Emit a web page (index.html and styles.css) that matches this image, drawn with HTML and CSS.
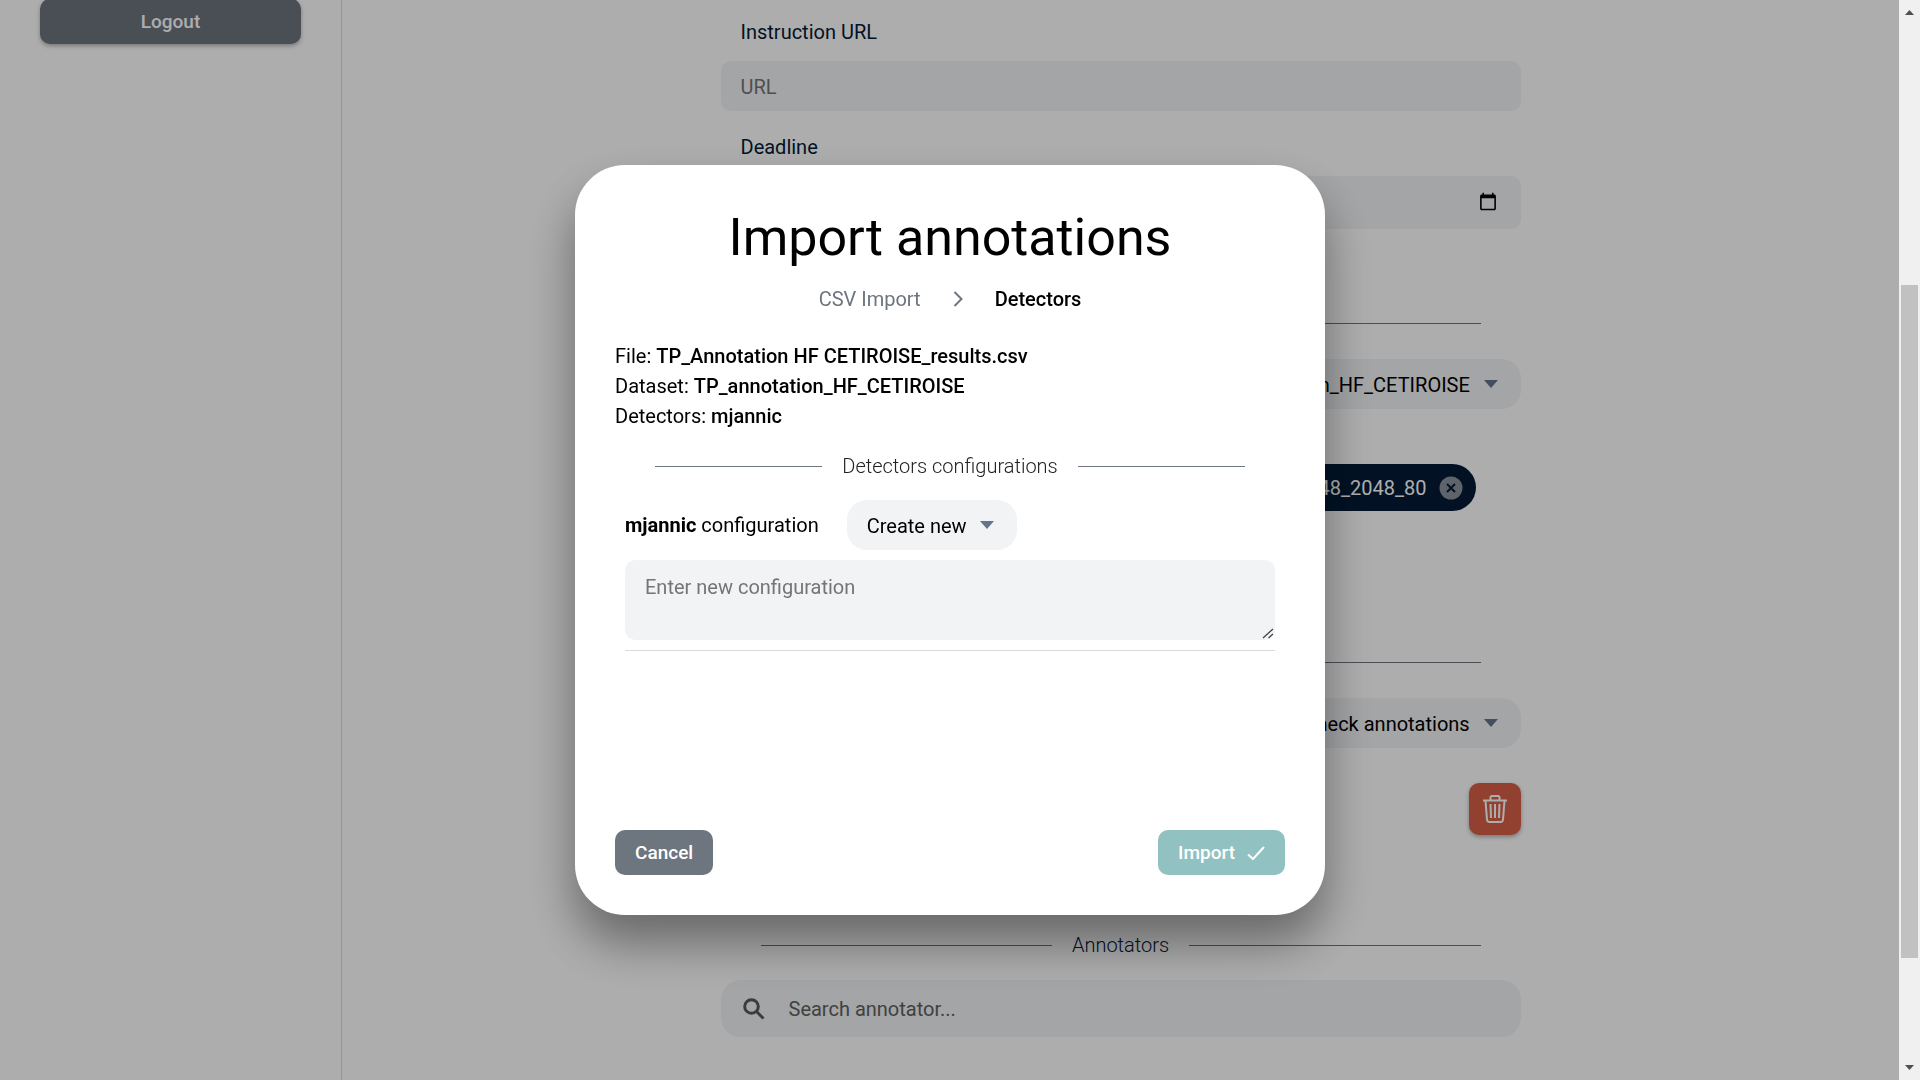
FILE: index.html
```html
<!DOCTYPE html>
<html lang="en">
<head>
<meta charset="utf-8">
<title>Import annotations</title>
<link rel="stylesheet" href="styles.css">
</head>
<body>
<div class="app">
  <aside class="sidebar">
    <button class="btn btn-medium btn-block" type="button">Logout</button>
  </aside>

  <main class="content">
    <form class="form">
      <div class="field">
        <label for="url">Instruction URL</label>
        <input class="input" id="url" type="url" placeholder="URL">
      </div>
      <div class="field field-date">
        <label for="deadline">Deadline</label>
        <input class="input" id="deadline" type="date">
      </div>

      <hr class="rule">
      <div class="row">
        <div class="select">
          <select aria-label="Dataset"><option>TP_annotation_HF_CETIROISE</option></select>
          <svg class="caret" viewBox="0 0 14 8" aria-hidden="true"><path d="M0 0h14L7 8z"/></svg>
        </div>
      </div>
      <div class="row row-chip">
        <div class="chip">2048_2048_80
          <button class="chip-close" type="button" aria-label="Remove">
            <svg viewBox="0 0 24 24" aria-hidden="true"><circle cx="12" cy="12" r="11.500"/><path d="M8 8l8 8M16 8l-8 8"/></svg>
          </button>
        </div>
      </div>

      <hr class="rule">
      <div class="row">
        <div class="select">
          <select aria-label="Usage"><option>Check annotations</option></select>
          <svg class="caret" viewBox="0 0 14 8" aria-hidden="true"><path d="M0 0h14L7 8z"/></svg>
        </div>
      </div>
      <div class="row row-delete">
        <button class="btn btn-danger" type="button" aria-label="Delete">
          <svg viewBox="0 0 28 28" aria-hidden="true"><path d="M2 5.500h24M9.500 5V2.500q0-1.500 1.500-1.500h6q1.500 0 1.500 1.500V5M4.500 6l1.500 18.500q.2 2.500 2.500 2.500h11q2.300 0 2.500-2.500L23.500 6M9.500 9l.5 14M14 9v14M18.500 9l-.5 14"/></svg>
        </button>
      </div>

      <h2 class="divider">Annotators</h2>
      <label class="search">
        <svg viewBox="0 0 22 22" aria-hidden="true"><circle cx="8.500" cy="8.500" r="6.800"/><path d="M13.500 13.500l7 7"/></svg>
        <input type="text" aria-label="Search annotator" placeholder="Search annotator...">
      </label>
    </form>
  </main>

  <div class="scrollbar" aria-hidden="true">
    <svg viewBox="0 0 9 5"><path d="M0 5h9L4.500 0z"/></svg>
    <div class="track"><div class="thumb"></div></div>
    <svg viewBox="0 0 9 5"><path d="M0 0h9L4.500 5z"/></svg>
  </div>
</div>

<div class="backdrop">
  <section class="modal" role="dialog" aria-labelledby="modal-title">
    <h1 id="modal-title">Import annotations</h1>
    <div class="steps">
      <span class="step">CSV Import</span>
      <svg viewBox="0 0 10 16" aria-hidden="true"><path d="M1.500 1l7 7-7 7"/></svg>
      <span class="step step-active">Detectors</span>
    </div>
    <div class="info">
      <p>File: <b>TP_Annotation HF CETIROISE_results.csv</b></p>
      <p>Dataset: <b>TP_annotation_HF_CETIROISE</b></p>
      <p>Detectors: <b>mjannic</b></p>
    </div>
    <h2 class="divider">Detectors configurations</h2>
    <div class="config">
      <div class="config-head">
        <label for="config-select"><strong>mjannic</strong> configuration</label>
        <div class="select">
          <select id="config-select"><option>Create new</option></select>
          <svg class="caret" viewBox="0 0 14 8" aria-hidden="true"><path d="M0 0h14L7 8z"/></svg>
        </div>
      </div>
      <textarea class="input" aria-label="New configuration" placeholder="Enter new configuration"></textarea>
    </div>
    <footer class="actions">
      <button class="btn btn-medium" type="button">Cancel</button>
      <button class="btn btn-primary" type="button">Import
        <svg viewBox="0 0 18 14" aria-hidden="true"><path d="M1 8.500l5 4.500L17 1"/></svg>
      </button>
    </footer>
  </section>
</div>
</body>
</html>
```
FILE: styles.css
```css
:root {
  --dark: #031b36;
  --medium: #6d757f;
  --light: #f1f3f5;
}

* { box-sizing: border-box; margin: 0; }

body {
  height: 100vh;
  overflow: hidden;
  background: #fff;
  color: #000;
  font: 400 20px/30px Roboto, sans-serif;
}

button, input, select, textarea { font: inherit; border: 0; }

.app {
  display: grid;
  grid-template-columns: 342px 1fr 21px;
  height: 100%;
}

.sidebar {
  border-right: 1px solid #d9dadc;
  padding: 0 40px;
}

.content { padding: 17px 40px; overflow: hidden; }

.form {
  max-width: 800px;
  margin: 0 auto;
  display: flex;
  flex-direction: column;
}

/* buttons */
.btn {
  display: flex;
  align-items: center;
  justify-content: center;
  gap: 12px;
  height: 45px;
  padding: 0 20px;
  border-radius: 10px;
  color: #fff;
  font-size: 19px;
  font-weight: 500;
  box-shadow: 0 2px 4px rgba(0, 0, 0, .3);
}
.btn svg { fill: none; stroke: #fff; }
.btn-medium { background: var(--medium); }
.btn-block { width: 100%; margin-top: -1px; }
.btn-primary { background: #92c1c1; }
.btn-primary svg { width: 18px; height: 14px; stroke-width: 2; }
.btn-danger { width: 52px; height: 52px; padding: 0; background: #d76148; }
.btn-danger svg { width: 28px; height: 28px; stroke-width: 2; }

/* fields */
.field { display: flex; flex-direction: column; gap: 14px; margin-bottom: 21px; color: var(--dark); }
.field label { padding: 0 20px; }
.input {
  width: 100%;
  height: 50px;
  padding: 12px 20px 10px;
  border-radius: 10px;
  background: var(--light);
}
.field-date { margin-bottom: 94px; }
.field-date .input { height: 53px; padding: 10px 21px 12px; }
.input::placeholder { color: #757575; }

.select { position: relative; display: flex; }
.select select {
  appearance: none;
  height: 50px;
  padding: 2px 50px 0 20px;
  border-radius: 20px;
  background: var(--light);
  color: #000;
}
.caret {
  position: absolute;
  right: 23px;
  top: 21px;
  width: 14px;
  height: 8px;
  fill: #64748b;
  pointer-events: none;
}

.rule { height: 1px; margin: 0 40px 35px; border: 0; background: var(--medium); }
.row { display: flex; justify-content: flex-end; }
.row-chip { padding: 55px 45px 151px; }
.row-delete { padding: 35px 0 95px; }

.chip {
  display: flex;
  align-items: center;
  gap: 12px;
  height: 47px;
  padding: 0 13px 0 20px;
  border-radius: 24px;
  background: var(--dark);
  color: #fff;
}
.chip-close { display: flex; padding: 0; background: none; }
.chip-close svg { width: 24px; height: 24px; fill: #8c939c; }
.chip-close path { stroke: var(--dark); stroke-width: 2; }

.divider {
  display: flex;
  align-items: center;
  gap: 20px;
  padding: 0 40px;
  font-size: 20px;
  font-weight: 300;
  color: var(--dark);
}
.divider::before, .divider::after {
  content: "";
  flex: 1;
  height: 1px;
  background: var(--medium);
}

.search {
  display: flex;
  align-items: center;
  gap: 24px;
  height: 57px;
  margin-top: 20px;
  padding: 0 22px;
  border-radius: 20px;
  background: var(--light);
}
.search svg { width: 22px; height: 22px; fill: none; stroke: #595959; stroke-width: 3; }
.search input { flex: 1; padding: 0; background: none; }
.search input::placeholder { color: #606060; }

/* page scrollbar */
.scrollbar {
  position: relative;
  z-index: 2;
  display: flex;
  flex-direction: column;
  align-items: center;
  padding: 10px 0;
  background: #f0f0f0;
}
.scrollbar svg { width: 9px; height: 5px; fill: #505050; }
.track { flex: 1; width: 17px; padding: 270px 0 107px; }
.thumb { height: 100%; background: #c1c1c1; }

/* modal */
.backdrop {
  position: fixed;
  inset: 0 20px 0 0;
  display: flex;
  align-items: center;
  justify-content: center;
  background: rgba(0, 0, 0, .32);
}
.modal {
  display: flex;
  flex-direction: column;
  width: 750px;
  min-height: 750px;
  padding: 40px;
  border-radius: 50px;
  background: #fff;
  box-shadow: 0 28px 48px rgba(0, 0, 0, .4);
}
.modal h1 { font-size: 52px; line-height: 66px; font-weight: 400; text-align: center; }
.steps {
  display: flex;
  align-items: center;
  justify-content: center;
  gap: 32px;
  margin-top: 13px;
}
.steps svg { width: 10px; height: 16px; fill: none; stroke: var(--medium); stroke-width: 2; }
.step { color: var(--medium); }
.step-active { color: #000; font-weight: 500; }
.info { margin: 27px 0 20px; }
.info b { font-weight: 500; }
.modal .divider { color: #222; }
.config { margin: 19px 10px 0; padding-bottom: 10px; border-bottom: 1px solid #d9dadc; }
.config-head { display: flex; align-items: center; gap: 28px; margin-bottom: 10px; }
.config textarea { display: block; height: 80px; }
.config textarea::-webkit-resizer {
  background: url("data:image/svg+xml,%3Csvg xmlns='http://www.w3.org/2000/svg' viewBox='0 0 15 15'%3E%3Cpath d='M3 13L13 4M8.500 13L13 9' stroke='%23444' stroke-width='1.300' fill='none'/%3E%3C/svg%3E") no-repeat center / 100%;
}
.actions { display: flex; justify-content: space-between; margin-top: auto; }
.actions .btn { box-shadow: none; }
```
